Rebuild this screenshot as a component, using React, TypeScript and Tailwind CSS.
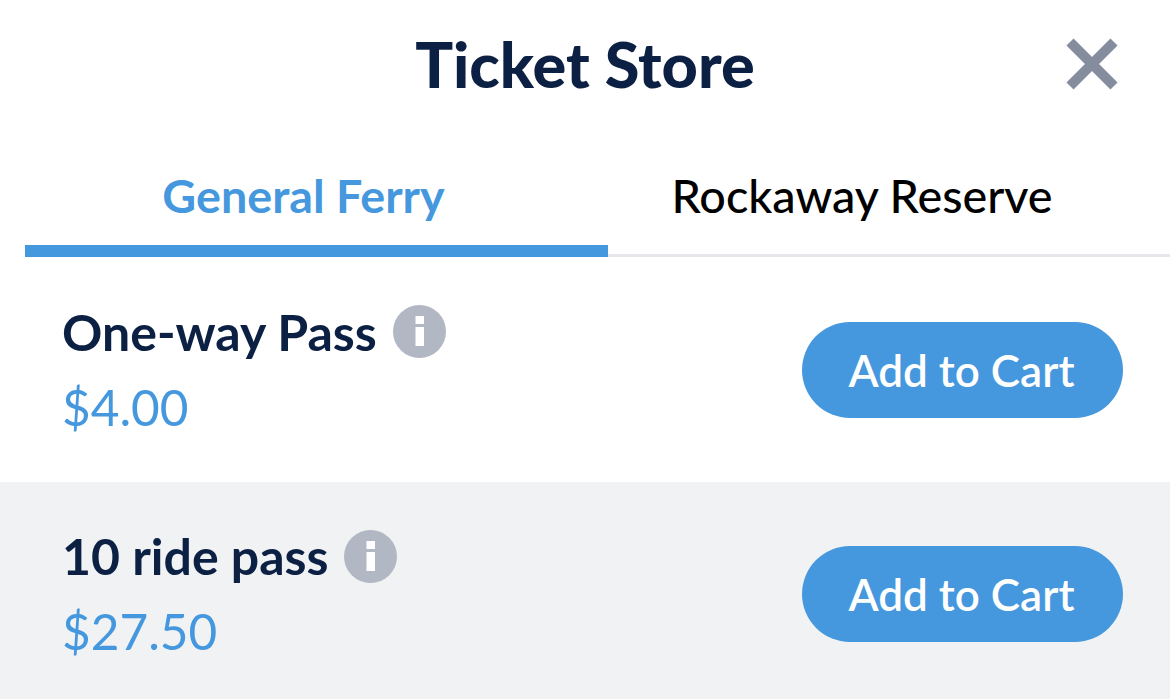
const InfoIcon = () => (
  <svg className="w-[53px] h-[53px] shrink-0" viewBox="0 0 53 53">
    <circle cx="26.5" cy="26.5" r="26.5" fill="#b1b7c3" />
    <rect x="22.5" y="11" width="8.5" height="8" fill="#fff" />
    <rect x="22.5" y="22" width="8.5" height="19" fill="#fff" />
  </svg>
);

const Row = ({ name, price, gray }: { name: string; price: string; gray?: boolean }) => {
  return (
    <div
      className={`flex flex-row items-center justify-between pl-[62px] pr-[47px] ${
        gray ? 'bg-[#f0f2f4] h-[224px]' : 'h-[225px]'
      }`}
    >
      <div className="flex flex-col pb-[5px]">
        <div className="flex flex-row items-center gap-[16px] h-[60px]">
          <span className="text-[50px] font-bold text-[#0c2044] leading-none">{name}</span>
          <InfoIcon />
        </div>
        <div className="text-[49.5px] text-[#4598de] leading-none mt-[21px]">{price}</div>
      </div>
      <div className="flex items-center justify-center w-[321px] h-[96px] pr-[2px] rounded-[48px] bg-[#4598de] text-white text-[44px] font-semibold">
        Add to Cart
      </div>
    </div>
  );
};

const App = () => {
  return (
    <div className="w-[1170px] h-[699px] overflow-hidden bg-white font-['Lato','Noto_Sans',sans-serif]">
      <div className="relative flex items-center justify-center h-[132px] pb-[6px]">
        <div className="text-[63px] font-black text-[#0c2044] leading-none">Ticket Store</div>
        <svg className="absolute right-[50px] top-[36px] w-[56px] h-[56px]" viewBox="0 0 56 56">
          <path d="M6 6 L50 50 M50 6 L6 50" stroke="#848c9e" strokeWidth="10" fill="none" />
        </svg>
      </div>
      <div className="flex flex-row ml-[25px] h-[125px]">
        <div className="flex items-center justify-center w-[583px] pt-[14px] pr-[26px] border-b-[12px] border-[#4598de] text-[46.7px] font-bold text-[#4598de]">
          General Ferry
        </div>
        <div className="flex items-center justify-center flex-1 pt-[4px] pr-[54px] border-b-[3px] border-[#e5e7ea] text-[46.7px] font-medium text-black">
          Rockaway Reserve
        </div>
      </div>
      <Row name="One-way Pass" price="$4.00" />
      <Row name="10 ride pass" price="$27.50" gray />
    </div>
  );
};

export default App;
